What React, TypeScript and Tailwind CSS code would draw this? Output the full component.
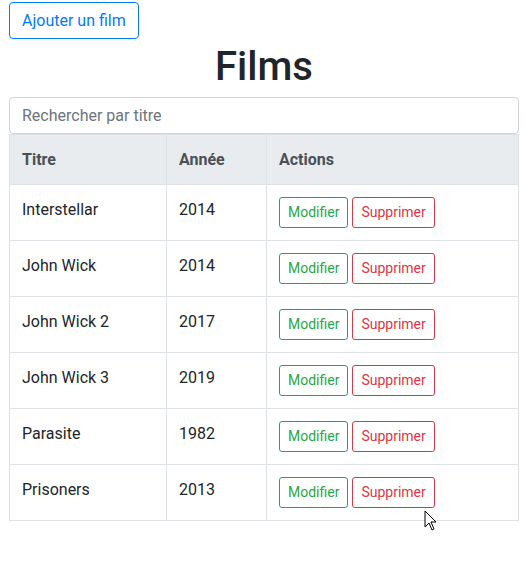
import React from "react";

const films = [
  ["Interstellar", "2014"],
  ["John Wick", "2014"],
  ["John Wick 2", "2017"],
  ["John Wick 3", "2019"],
  ["Parasite", "1982"],
  ["Prisoners", "2013"],
];

export default function App() {
  return (
    <div className="relative min-h-[576px] bg-white pl-[9px] pr-[6px] pt-[2px] text-[16px] text-[#212529]" style={{ fontFamily: "Roboto, 'Liberation Sans', sans-serif" }}>
      <button className="h-[37px] rounded-[4px] border border-[#007bff] px-[12px] text-[16px] leading-[24px] text-[#007bff]">
        Ajouter un film
      </button>
      <h1 className="text-center text-[40px] font-medium leading-[56px] text-[#212529]">Films</h1>
      <input
        className="mt-[2px] block h-[37px] w-full rounded-[4px] border border-[#ced4da] px-[12px] text-[16px] text-[#495057] placeholder:text-[#6c757d] outline-none"
        placeholder="Rechercher par titre"
      />
      <table className="w-full border-collapse border border-[#dee2e6]">
        <thead>
          <tr className="bg-[#e9ecef]">
            <th className="h-[50px] w-[157px] border border-[#dee2e6] px-[12px] text-left align-middle font-bold text-[#495057]">Titre</th>
            <th className="w-[100px] border border-[#dee2e6] px-[12px] text-left align-middle font-bold text-[#495057]">Année</th>
            <th className="border border-[#dee2e6] px-[12px] text-left align-middle font-bold text-[#495057]">Actions</th>
          </tr>
        </thead>
        <tbody>
          {films.map(([t, y]) => (
            <tr key={t}>
              <td className="h-[56px] border border-[#dee2e6] px-[12px] pt-[13px] align-top leading-[24px]">{t}</td>
              <td className="border border-[#dee2e6] px-[12px] pt-[13px] align-top leading-[24px]">{y}</td>
              <td className="border border-[#dee2e6] px-[12px] pt-[12px] align-top">
                <div className="flex gap-[4px]">
                  <button className="h-[31px] rounded-[3px] border border-[#28a745] px-[8px] text-[14px] leading-[21px] text-[#28a745]">Modifier</button>
                  <button className="h-[31px] rounded-[3px] border border-[#dc3545] px-[8px] text-[14px] leading-[21px] text-[#dc3545]">Supprimer</button>
                </div>
              </td>
            </tr>
          ))}
        </tbody>
      </table>
      <svg className="absolute left-[424px] top-[510px]" width="14" height="22" viewBox="0 0 14 22">
        <path d="M1 1 L1 17 L5 13 L8 20 L10 19 L7 12 L12 12 Z" fill="white" stroke="black" strokeWidth="1" strokeLinejoin="round" />
      </svg>
    </div>
  );
}
